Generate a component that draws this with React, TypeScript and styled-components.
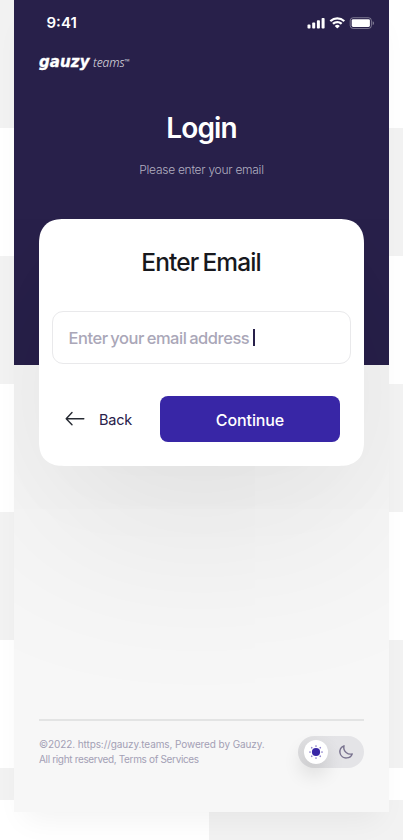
import React from 'react';
import styled, { createGlobalStyle } from 'styled-components';

const GlobalStyle = createGlobalStyle`
  * { box-sizing: border-box; }
  body { margin: 0; }
  button { border: 0; padding: 0; background: none; font: inherit; }
`;

const Backdrop = styled.div`
  width: 403px;
  height: 840px;
  overflow: hidden;
  font-family: Inter, 'Liberation Sans', sans-serif;
  background:
    linear-gradient(#fff, #fff) 0 800px / 209px 40px no-repeat,
    linear-gradient(#f2f2f2, #f2f2f2) 209px 800px / 194px 40px no-repeat,
    repeating-linear-gradient(#f2f2f2 0 128px, #fff 128px 256px) 0 0 / 209px 840px no-repeat,
    repeating-linear-gradient(#fff 0 128px, #f2f2f2 128px 256px) 209px 0 / 194px 840px no-repeat;
`;

const Phone = styled.main`
  width: 375px;
  height: 812px;
  margin-left: 14px;
  padding: 0 25px;
  display: flex;
  flex-direction: column;
  background: linear-gradient(#28204a 0 365px, #f7f7f7 365px);
  box-shadow: 0 18px 28px -10px rgba(0, 0, 0, 0.05);
`;

const StatusBar = styled.header`
  height: 46px;
  margin-right: -10px;
  padding-left: 7.5px;
  display: flex;
  align-items: center;
  justify-content: space-between;
`;

const Clock = styled.time`
  color: #fff;
  font-size: 15px;
  font-weight: 600;
  line-height: 20px;
  letter-spacing: 0;
`;

const Brand = styled.div`
  height: 32px;
  display: flex;
  align-items: baseline;
  gap: 3px;
  color: #fff;
  padding-top: 6px;
  line-height: 20px;
  white-space: nowrap;
`;

const BrandName = styled.span`
  width: 51px;
  font: italic 700 15px/20px 'DejaVu Sans', sans-serif;
  letter-spacing: 0.1px;
  -webkit-text-stroke: 0.35px #fff;
`;

const BrandProduct = styled.span`
  font: italic 300 12px/20px 'Noto Sans', 'Open Sans', sans-serif;
  letter-spacing: -0.1px;
  opacity: 0.85;
`;

const TradeMark = styled.span`
  font-size: 7px;
  line-height: 1;
  position: relative;
  top: -3px;
`;

const Title = styled.h1`
  margin: 30px 0 0;
  height: 40px;
  text-align: center;
  color: #fff;
  font-size: 28px;
  line-height: 40px;
  font-weight: 600;
  letter-spacing: -0.9px;
`;

const Subtitle = styled.p`
  margin: 12px 0 0;
  height: 20px;
  text-align: center;
  color: #b2afc0;
  font-size: 12px;
  line-height: 20px;
  font-weight: 300;
  letter-spacing: -0.27px;
`;

const Card = styled.section`
  margin-top: 39px;
  height: 246.5px;
  padding: 0 13px;
  border-radius: 25px;
  corner-shape: superellipse(1.3);
  background: #fff;
  box-shadow: 0 50px 200px rgba(0, 0, 0, 0.1), 0 40px 90px rgba(0, 0, 0, 0.015);
  clip-path: inset(0 -25px -240px -25px);
`;

const CardTitle = styled.h2`
  margin: 23px 0 0;
  height: 40px;
  text-align: center;
  color: #17181d;
  font-size: 24.5px;
  line-height: 40px;
  font-weight: 500;
  letter-spacing: -0.9px;
  word-spacing: -1.5px;
  text-indent: -1px;
`;

const Field = styled.div`
  height: 53px;
  margin-top: 29px;
  padding-left: 15.5px;
  display: flex;
  align-items: center;
  border: 1px solid #e9e9eb;
  border-radius: 11px;
`;

const Placeholder = styled.span`
  color: #aaa7b8;
  font-size: 16.5px;
  font-weight: 500;
  letter-spacing: -0.46px;
  word-spacing: -1.2px;
  white-space: nowrap;
`;

const Caret = styled.i`
  width: 2px;
  height: 17px;
  margin-left: 4px;
  background: #28204a;
`;

const Actions = styled.div`
  display: flex;
  align-items: center;
  justify-content: space-between;
  margin-top: 32px;
  padding: 0 11px 0 13px;
`;

const BackButton = styled.button`
  height: 46px;
  display: flex;
  align-items: center;
  gap: 14px;
  color: #28204a;
  font-size: 14.5px;
  letter-spacing: -0.25px;
`;

const ContinueButton = styled.button`
  width: 180px;
  height: 46px;
  padding-top: 2px;
  border-radius: 8px;
  background: #3826a6;
  color: #fff;
  font-size: 16px;
  font-weight: 500;
  letter-spacing: -0.1px;
`;

const Footer = styled.footer`
  margin-top: auto;
  height: 93px;
  padding-top: 15px;
  border-top: 2px solid #e3e4e4;
  display: flex;
  align-items: flex-start;
  justify-content: space-between;
`;

const Legal = styled.p`
  margin: 1px 0 0;
  color: #a3a0b5;
  font-size: 10px;
  line-height: 15px;
  white-space: nowrap;
`;

const LegalLine = styled.span<{ $tracking: number }>`
  display: block;
  letter-spacing: ${({ $tracking }) => $tracking}px;
`;

const ThemeSwitch = styled.div`
  width: 66px;
  height: 32px;
  padding: 4px 9px 4px 6px;
  display: flex;
  align-items: center;
  justify-content: space-between;
  border-radius: 16px;
  background: linear-gradient(90deg, #dedee0, #e4e4e7 60%);
`;

const Thumb = styled.span`
  width: 24px;
  height: 24px;
  border-radius: 50%;
  background: #fff;
  display: grid;
  place-items: center;
  box-shadow: -2px 10px 20px rgba(0, 0, 0, 0.14);
`;

const StatusIcons = () => (
  <svg width="68" height="14" viewBox="0 0 68 14" fill="#fff">
    <rect x="1.5" y="8.6" width="3" height="4" rx="0.8" />
    <rect x="6.2" y="6.6" width="3" height="6" rx="0.8" />
    <rect x="10.9" y="4.3" width="3" height="8.3" rx="0.8" />
    <rect x="15.6" y="2" width="3" height="10.6" rx="0.8" />
    <g transform="translate(23.6 1.2)">
      <path d="M7.7 2.3c2.2 0 4.3.9 5.9 2.3.1.1.3.1.4 0l1.2-1.1c.1-.1.1-.3 0-.5a10.9 10.9 0 0 0-15 0c-.1.2-.1.4 0 .5l1.2 1.1c.1.1.3.1.4 0a8.7 8.7 0 0 1 5.9-2.3Z" />
      <path d="M7.7 6c1.2 0 2.4.5 3.3 1.2.1.2.3.2.4 0l1.2-1.1c.1-.2.1-.4 0-.5a7.2 7.2 0 0 0-9.8 0c-.1.1-.1.3 0 .5L4 7.2c.1.2.3.2.4 0A5 5 0 0 1 7.7 6Z" />
      <path d="M10 8.5c.2.1.2.3 0 .5l-2 2c-.2.2-.4.2-.6 0l-2-2c-.2-.2-.2-.4 0-.5a3.6 3.6 0 0 1 4.6 0Z" />
    </g>
    <rect x="44.2" y="1.7" width="21.2" height="10.8" rx="3" fill="none" stroke="#fff" strokeOpacity="0.38" />
    <rect x="45.7" y="3.2" width="18.2" height="7.8" rx="1.4" />
    <path d="M66.7 5.3v3.8c.7-.3 1.2-1 1.2-1.9S67.4 5.6 66.7 5.3Z" opacity="0.45" />
  </svg>
);

const BackArrow = () => (
  <svg width="20" height="16" viewBox="0 0 20 16" fill="none" stroke="#262a32" strokeWidth="1.4" strokeLinecap="round" strokeLinejoin="round">
    <path d="M18.8 7.7H1.2M7 1.5 1.2 7.7 7 13.8" />
  </svg>
);

const Sun = () => (
  <svg width="14" height="14" viewBox="0 0 14 14">
    <circle cx="7" cy="7" r="4.1" fill="#3826a6" />
    <g fill="#3826a6" opacity="0.6">
      {[0, 45, 90, 135, 180, 225, 270, 315].map((angle) => (
        <circle key={angle} cx="7" cy="1" r="0.85" transform={`rotate(${angle} 7 7)`} />
      ))}
    </g>
  </svg>
);

const Moon = () => (
  <svg width="18" height="18" viewBox="0 0 18 18" fill="none" stroke="#79738f" strokeWidth="1.4" strokeLinejoin="round">
    <path d="M7 2.8C4.2 4 2.5 6.8 3 9.9c.6 3.3 3.5 5.3 6.7 5 2.6-.2 4.7-1.7 5.500-4C11.300 12 5.700 8.700 7 2.800Z" />
  </svg>
);

export default function App() {
  return (
    <Backdrop>
      <GlobalStyle />
      <Phone>
        <StatusBar>
          <Clock>9:41</Clock>
          <StatusIcons />
        </StatusBar>
        <Brand>
          <BrandName>gauzy</BrandName>
          <BrandProduct>teams<TradeMark>™</TradeMark></BrandProduct>
        </Brand>
        <Title>Login</Title>
        <Subtitle>Please enter your email</Subtitle>
        <Card>
          <CardTitle>Enter Email</CardTitle>
          <Field>
            <Placeholder>Enter your email address</Placeholder>
            <Caret />
          </Field>
          <Actions>
            <BackButton><BackArrow />Back</BackButton>
            <ContinueButton>Continue</ContinueButton>
          </Actions>
        </Card>
        <Footer>
          <Legal>
            <LegalLine $tracking={-0.1}>©2022. https://gauzy.teams, Powered by Gauzy.</LegalLine>
            <LegalLine $tracking={-0.34}>All right reserved, Terms of Services</LegalLine>
          </Legal>
          <ThemeSwitch>
            <Thumb><Sun /></Thumb>
            <Moon />
          </ThemeSwitch>
        </Footer>
      </Phone>
    </Backdrop>
  );
}
